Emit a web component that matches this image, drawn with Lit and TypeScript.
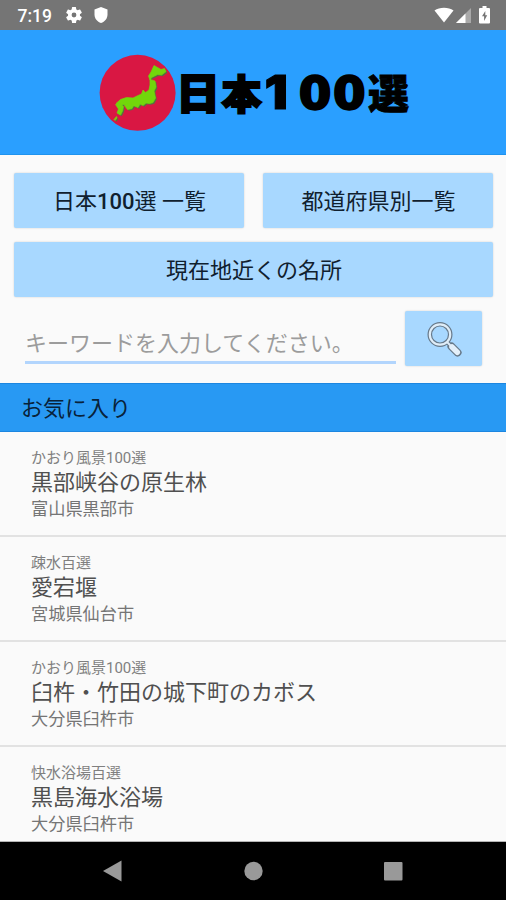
import { LitElement, html, css, svg } from "lit";
import { customElement, property } from "lit/decorators.js";

interface Favorite {
  group: string;
  name: string;
  place: string;
}

const FAVORITES: Favorite[] = [
  { group: "かおり風景100選", name: "黒部峡谷の原生林", place: "富山県黒部市" },
  { group: "疎水百選", name: "愛宕堰", place: "宮城県仙台市" },
  { group: "かおり風景100選", name: "臼杵・竹田の城下町のカボス", place: "大分県臼杵市" },
  { group: "快水浴場百選", name: "黒島海水浴場", place: "大分県臼杵市" },
];

@customElement("status-bar")
class StatusBar extends LitElement {
  static styles = css`
    :host {
      display: flex;
      align-items: center;
      flex: none;
      height: 30px;
      padding: 0 16px 0 17.5px;
      background: #757575;
      color: #fff;
      font: 500 17.5px/30px Roboto, sans-serif;
    }
    .time { width: 48px; padding-top: 2px; }
    .gear { width: 16px; height: 16px; margin-right: 12px; }
    .shield { width: 14px; height: 16px; }
    .right { display: flex; align-items: center; margin-left: auto; }
    .wifi { width: 20px; height: 16px; margin-right: 2px; }
    .signal { width: 15px; height: 16px; margin-right: 8px; }
    .battery { width: 11px; height: 18px; }
    svg { display: block; }
  `;
  render() {
    return html`
      <span class="time">7:19</span>
      <svg class="gear" viewBox="2 2 20 20" fill="#fff">
        <path d="M19.4 13a7.500 7.500 0 0 0 0-2l2.100-1.650a.5.5 0 0 0 .12-.64l-2-3.460a.5.5 0 0 0-.61-.22l-2.490 1a7.300 7.300 0 0 0-1.690-.98l-.38-2.650A.49.49 0 0 0 14 2h-4a.49.49 0 0 0-.49.42l-.38 2.650c-.61.25-1.170.59-1.690.98l-2.490-1a.5.5 0 0 0-.61.22l-2 3.460a.5.5 0 0 0 .12.64L4.600 11a7.900 7.900 0 0 0 0 2l-2.100 1.650a.5.5 0 0 0-.12.64l2 3.460c.12.22.39.3.61.22l2.490-1c.52.4 1.080.73 1.690.98l.38 2.650c.03.24.24.4.49.4h4c.25 0 .46-.18.49-.42l.38-2.650c.61-.25 1.170-.59 1.690-.98l2.490 1c.23.09.49 0 .61-.22l2-3.460a.5.5 0 0 0-.12-.64zM12 15a3 3 0 1 1 0-6 3 3 0 0 1 0 6z" />
      </svg>
      <svg class="shield" viewBox="0 0 14 16"><path d="M7 0 13.500 2.500V7.500C13.500 11.500 10.800 14.800 7 16 3.200 14.800.5 11.500.5 7.500V2.500Z" fill="#fff" /></svg>
      <div class="right">
        <svg class="wifi" viewBox="0 0 20 16"><path d="M.5 3.500C5.500-.1 14.500-.1 19.500 3.500L10 15.500Z" fill="#fff" /></svg>
        <svg class="signal" viewBox="0 0 15 16"><path d="M15 1V16H0Z" fill="#a9a9a9" /><path d="M9.500 6.500V16H0Z" fill="#fff" /></svg>
        <svg class="battery" viewBox="0 0 11 18"><path d="M3.500 0h4v2H10q1 0 1 1V16.500q0 1-1 1H1q-1 0-1-1V3q0-1 1-1h2.500Z" fill="#fff" /><path d="M6.300 5 3 10.300h2.100V15L8.200 9.300H6.300Z" fill="#757575" /></svg>
      </div>
    `;
  }
}

@customElement("brand-header")
class BrandHeader extends LitElement {
  static styles = css`
    :host {
      display: flex;
      justify-content: center;
      flex: none;
      box-sizing: border-box;
      height: 125px;
      padding-top: 21px;
      background: #2a9fff;
      border-bottom: 1px solid #1f93ee;
    }
    .logo { display: block; width: 320px; height: 84px; }
    .word {
      font-family: "Noto Sans CJK JP", sans-serif;
      font-weight: 900;
      stroke: #000;
      stroke-width: 2;
    }
    .dense { stroke-width: 0.8; }
    .one {
      font-family: Inter, sans-serif;
      font-weight: 900;
      stroke: #000;
      stroke-width: 1;
    }
    .zero {
      font-family: "DejaVu Sans", sans-serif;
      font-weight: 700;
      stroke: #000;
      stroke-width: 2.4;
    }
  `;
  render() {
    const islands = svg`
      <path d="M154 65.500 157.500 67.500 161 69.500 164.500 68.500 166 71.500 161.500 75 157.500 74.500 154.500 76 151.500 77.500 150 80 148.500 76 151 72Z" />
      <path d="M150 79.500 155 81 156 87 154 91 155.500 98 153 102.500 149.500 103.500 146 103 143 105.500 140 104 138 107.500 134.500 106 129 105.500 123 104.500 119 106 116 103.500 120.500 99.500 126.500 97.500 133 98 138 95.500 141.500 94 143 90 145.500 92.500 149 90 150 85Z" />
      <path d="M124.500 105.500 128.500 103.500 134 104.500 132 108.500 127.500 109.500Z" />
      <path d="M115.500 104.500 120 103.500 123.500 106.500 122.500 111 120.500 115 117 113 118.500 109Z" />
      <path d="M114 119.500 116.500 116.500 117 118 115 120.500Z" />
    `;
    return html`
      <svg class="logo" viewBox="93 51 320 84">
        <circle cx="137.600" cy="92.800" r="38" fill="#d91743" />
        <g fill="#54733f" transform="translate(1.300 1.300)">${islands}</g>
        <g fill="#72d70b" stroke="#72d70b" stroke-width=".7">${islands}</g>
        <text class="word" font-size="42" transform="translate(176 109) scale(1.050 1)">日</text>
        <text class="word" font-size="40" transform="translate(221.500 108.500)">本</text>
        <text class="one" font-size="47" transform="translate(264.500 109) scale(1.100 1)">1</text>
        <text class="zero" font-size="44" transform="translate(299 108.500) scale(1.050 1)">0</text>
        <text class="zero" font-size="44" transform="translate(333.300 108.500) scale(1.050 1)">0</text>
        <text class="word dense" font-size="41" transform="translate(368 108.500)">選</text>
      </svg>
    `;
  }
}

@customElement("favorite-row")
class FavoriteRow extends LitElement {
  @property({ attribute: false }) item!: Favorite;
  static styles = css`
    :host {
      display: flex;
      flex-direction: column;
      flex: none;
      box-sizing: border-box;
      height: 105px;
      padding: 15px 31px 0;
      border-bottom: 2px solid #e2e2e2;
      color: #757575;
      white-space: nowrap;
    }
    .group { font-size: 15px; line-height: 22px; color: #808080; }
    .name { font-size: 22px; line-height: 28px; color: #505050; }
    .place { font-size: 17.2px; line-height: 24px; }
  `;
  render() {
    return html`
      <div class="group">${this.item.group}</div>
      <div class="name">${this.item.name}</div>
      <div class="place">${this.item.place}</div>
    `;
  }
}

@customElement("nav-bar")
class NavBar extends LitElement {
  static styles = css`
    :host {
      display: flex;
      align-items: center;
      justify-content: center;
      gap: 120px;
      flex: none;
      box-sizing: border-box;
      height: 59px;
      border-top: 1px solid #b5b5b5;
      background: #000;
    }
    svg { display: block; width: 20px; height: 22px; fill: #999; }
  `;
  render() {
    return html`
      <svg viewBox="0 0 20 22"><path d="M0 11 18.500.5V21.500Z" /></svg>
      <svg viewBox="0 0 20 22"><circle cx="10.500" cy="11" r="9.200" /></svg>
      <svg viewBox="0 0 20 22"><rect x="1" y="2" width="18.500" height="18.500" rx="1" /></svg>
    `;
  }
}

@customElement("app-root")
class AppRoot extends LitElement {
  static styles = css`
    :host {
      display: flex;
      flex-direction: column;
      height: 900px;
      overflow: hidden;
      background: #fafafa;
      font-family: Roboto, "Noto Sans CJK JP", sans-serif;
      color: #1d2b38;
    }
    .controls {
      display: grid;
      grid-template-columns: 1fr 1fr;
      gap: 14px 19px;
      flex: none;
      padding: 18px 13px 0 14px;
    }
    button {
      box-sizing: border-box;
      height: 55px;
      padding: 2px 0 0 1px;
      border: 0;
      border-radius: 2px;
      background: #a8d8ff;
      box-shadow: 0 0 2px #00000030;
      color: #10202e;
      font: 22px/53px Roboto, "Noto Sans CJK JP", sans-serif;
    }
    .count { font-weight: 500; }
    .wide { grid-column: 1 / 3; }
    .search {
      display: flex;
      flex: none;
      gap: 9px;
      height: 55px;
      padding: 14px 24px 17px 25px;
    }
    .field {
      flex: 1;
      box-sizing: border-box;
      height: 53px;
      padding: 15px 0 0;
      border: 0;
      border-bottom: 3px solid #b2d5fd;
      outline: none;
      background: none;
      color: #333;
      font: 22px/34px Roboto, "Noto Sans CJK JP", sans-serif;
    }
    .field::placeholder { color: #9c9c9c; opacity: 1; }
    .find { display: flex; justify-content: center; align-items: center; width: 77px; padding: 0; }
    .glass { width: 36px; height: 36px; }
    .heading {
      flex: none;
      box-sizing: border-box;
      height: 49px;
      padding-left: 21px;
      border-top: 1px solid #1c86e0;
      border-bottom: 1px solid #1c86e0;
      background: #2899f3;
      color: #08223a;
      font-size: 22px;
      line-height: 49px;
    }
    .list {
      display: flex;
      flex-direction: column;
      flex: 1;
      min-height: 0;
      overflow: hidden;
    }
  `;
  render() {
    return html`
      <status-bar></status-bar>
      <brand-header></brand-header>
      <div class="controls">
        <button>日本<span class="count">100</span>選 一覧</button>
        <button>都道府県別一覧</button>
        <button class="wide">現在地近くの名所</button>
      </div>
      <div class="search">
        <input class="field" placeholder="キーワードを入力してください。" />
        <button class="find" aria-label="検索">
          <svg class="glass" viewBox="0 0 36 36" fill="none">
            <path d="M20.500 20.500 31 31" stroke="#67798a" stroke-width="4" />
            <path d="M25.500 25.500 31.500 31.500" stroke="#67798a" stroke-width="8" stroke-linecap="round" />
            <circle cx="14" cy="13.500" r="10.200" stroke="#67798a" stroke-width="4.600" />
            <circle cx="14" cy="13.500" r="10.200" stroke="#dfedf8" stroke-width="2.200" />
            <path d="M21 21 26 26" stroke="#dfedf8" stroke-width="2" />
            <path d="M26 26 31.300 31.300" stroke="#e4f0fa" stroke-width="5.500" stroke-linecap="round" />
          </svg>
        </button>
      </div>
      <div class="heading">お気に入り</div>
      <div class="list">${FAVORITES.map((f) => html`<favorite-row .item=${f}></favorite-row>`)}</div>
      <nav-bar></nav-bar>
    `;
  }
}
